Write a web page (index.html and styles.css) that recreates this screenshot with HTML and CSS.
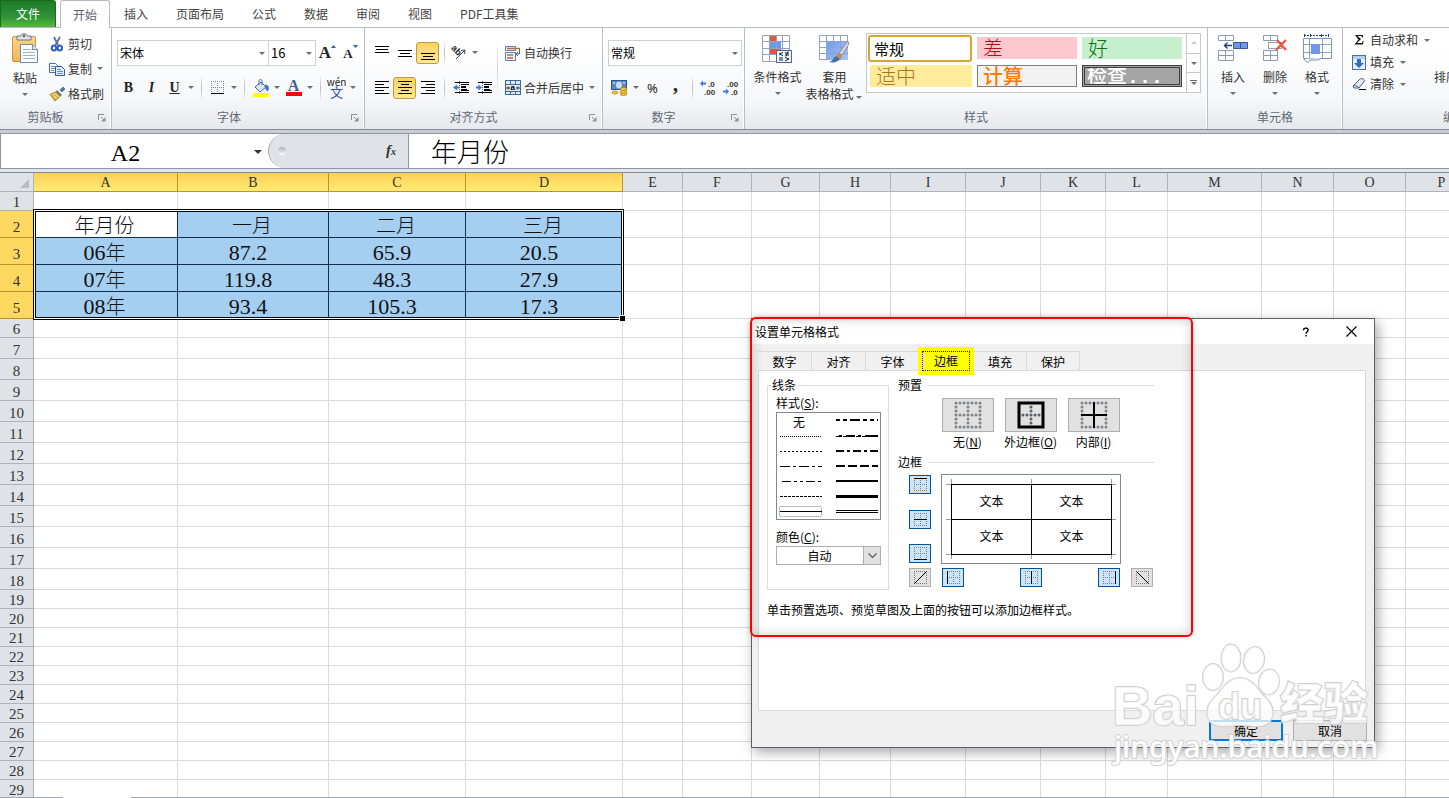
FILE: index.html
```html
<!DOCTYPE html>
<html lang="zh-CN">
<head>
<meta charset="utf-8">
<title>设置单元格格式</title>
<link rel="stylesheet" href="styles.css">
</head>
<body>
<svg class="defs" width="0" height="0" aria-hidden="true">
  <defs>
    <linearGradient id="cellBlue" x1="0" y1="0" x2="1" y2="1"><stop offset="0" stop-color="#6f9af0"/><stop offset="1" stop-color="#a9c4fa"/></linearGradient>
    <linearGradient id="gold" x1="0" y1="0" x2="0" y2="1"><stop offset="0" stop-color="#f9d58a"/><stop offset="1" stop-color="#eeb656"/></linearGradient>
    <symbol id="launch" viewBox="0 0 8 8"><path d="M.5 6V.5H6" fill="none" stroke="#8a9099"/><path d="M3 3l3 3" stroke="#8a9099"/><path d="M7.500 3v4.500H3z" fill="#8a9099"/></symbol>
    <symbol id="dots" viewBox="0 0 13 13"><path d="M0 .5h13M0 6.500h13M0 12.500h13M.5 0v13M6.500 0v13M12.500 0v13" stroke="#777f88" stroke-dasharray="1 1" fill="none"/></symbol>
    <symbol id="dotframe" viewBox="0 0 13 13"><path d="M0 .5h13M0 12.500h13M.5 0v13M12.500 0v13" stroke="#777" stroke-dasharray="1 1" fill="none"/></symbol>
  </defs>
</svg>
<div class="app">
  <nav class="tabs">
    <button class="tab tab-file">文件</button>
    <button class="tab tab-active">开始</button>
    <button class="tab">插入</button>
    <button class="tab">页面布局</button>
    <button class="tab">公式</button>
    <button class="tab">数据</button>
    <button class="tab">审阅</button>
    <button class="tab">视图</button>
    <button class="tab">PDF工具集</button>
  </nav>

  <div class="ribbon">
    <section class="group g-clip">
      <div class="group-body">
        <button class="big paste">
          <svg width="28" height="32" viewBox="0 0 28 32"><rect x="1.500" y="3.500" width="23" height="25" rx="1.500" fill="url(#gold)" stroke="#cf9440"/><path d="M6 3h4c0-3 6-3 6 0h4v4H6z" fill="#dfe3e8" stroke="#6d747d"/><circle cx="13" cy="3" r="1.200" fill="#555"/><path d="M9.500 11.500h12l5 5v13h-17z" fill="#fff" stroke="#7488a8"/><path d="M21.500 11.500v5h5" fill="#dce6f4" stroke="#7488a8"/><path d="M12 16.500h8M12 19.500h12M12 22.500h12M12 25.500h12" stroke="#9db4d6"/></svg>
          <span>粘贴</span><i class="caret"></i>
        </button>
        <div class="stack">
          <button class="line"><svg width="16" height="16" viewBox="0 0 16 16"><path d="M5 1l4 8M11 1L6.500 9" stroke="#58708c" stroke-width="1.800" fill="none"/><ellipse cx="5" cy="12" rx="2.200" ry="2.500" fill="none" stroke="#2d5fc0" stroke-width="2"/><ellipse cx="10.800" cy="12" rx="2.200" ry="2.500" fill="none" stroke="#2d5fc0" stroke-width="2"/></svg>剪切</button>
          <button class="line"><svg width="16" height="16" viewBox="0 0 16 16"><path d="M.5 2.500h6l2 2v7h-8z" fill="#fff" stroke="#4a6ea9"/><path d="M2 5.500h4M2 7.500h4M2 9.500h3" stroke="#5b8ad0"/><path d="M6.500 5.500h6l3 3v6h-9z" fill="#e9f1fd" stroke="#2d5796"/><path d="M8 8.500h4M8 10.500h6M8 12.500h6" stroke="#5b8ad0"/></svg>复制<i class="caret"></i></button>
          <button class="line"><svg width="16" height="16" viewBox="0 0 16 16"><path d="M11 4l3-3 2 2-3 3z" fill="#5378ae" stroke="#33517f" stroke-width=".6"/><path d="M8 4l5 5-2 1.500L6.500 6z" fill="#75797e"/><path d="M6.500 6L1 8.500 6 15l5-4.500z" fill="#f2d469" stroke="#9d8029"/><path d="M3 9l4 5M5 8l4 4" stroke="#c5a23c"/></svg>格式刷</button>
        </div>
      </div>
      <footer>剪贴板<svg class="launch"><use href="#launch"/></svg></footer>
    </section>

    <section class="group g-font">
      <div class="group-body rows">
        <div class="row">
          <label class="combo"><select class="w-name" aria-label="字体"><option>宋体</option></select></label>
          <label class="combo joined"><select class="w-size" aria-label="字号"><option>16</option></select></label>
          <button class="ib serif grow">A<svg width="5" height="3"><path d="M0 3h5L2.500 0z" fill="#2d5fa8"/></svg></button>
          <button class="ib serif shrink">A<svg width="5" height="3"><path d="M0 0h5L2.500 3z" fill="#2d5fa8"/></svg></button>
        </div>
        <div class="row">
          <button class="ib serif b">B</button><button class="ib serif i">I</button><button class="ib serif u">U</button><i class="caret"></i><i class="sep"></i>
          <button class="ib"><svg width="13" height="13"><use href="#dots"/><path d="M0 12.500h13" stroke="#000"/></svg></button><i class="caret"></i><i class="sep"></i>
          <button class="ib"><svg width="18" height="18" viewBox="0 0 18 18"><path d="M3 8l6-5 5 5-6 5z" fill="#dbe6f4" stroke="#446a9e"/><path d="M7 6V2c0-2 3-2 3 0v4" fill="none" stroke="#446a9e"/><path d="M13 6c4 0 4 4 2.500 6-1.500-1-2-3-2.500-6z" fill="#3f74c4" stroke="#3f74c4"/><path d="M1 14h16v4H1z" fill="#ff0"/></svg></button><i class="caret"></i>
          <button class="ib serif fontcolor">A<b></b></button><i class="caret"></i><i class="sep"></i>
          <button class="ib wen"><span>wén</span><b>文</b></button><i class="caret"></i>
        </div>
      </div>
      <footer>字体<svg class="launch"><use href="#launch"/></svg></footer>
    </section>

    <section class="group g-align">
      <div class="group-body">
        <div class="rows align-left">
          <div class="row">
            <button class="ib"><svg width="14" height="14"><path d="M0 .5h14M1 3.500h12M0 6.500h14" stroke="#000"/></svg></button>
            <button class="ib"><svg width="14" height="14"><path d="M0 4.500h14M2 7.500h10M0 10.500h14" stroke="#000"/></svg></button>
            <button class="ib on"><svg width="14" height="14"><path d="M0 7.500h14M2 10.500h10M0 13.500h14" stroke="#000"/></svg></button>
            <i class="sep"></i>
            <button class="ib orient"><svg width="17" height="17" viewBox="0 0 17 17"><text x="0" y="8" transform="rotate(45 4 6)" class="abtext">ab</text><path d="M5 15L14 6M14 6l-4 .5M14 6l-.5 4" stroke="#445" fill="none"/></svg></button><i class="caret"></i>
          </div>
          <div class="row">
            <button class="ib"><svg width="14" height="13"><path d="M0 .5h14M0 3.500h9M0 6.500h14M0 9.500h9M0 12.500h14" stroke="#000"/></svg></button>
            <button class="ib on"><svg width="14" height="13"><path d="M0 .5h14M3 3.500h8M0 6.500h14M3 9.500h8M0 12.500h14" stroke="#000"/></svg></button>
            <button class="ib"><svg width="14" height="13"><path d="M0 .5h14M5 3.500h9M0 6.500h14M5 9.500h9M0 12.500h14" stroke="#000"/></svg></button>
            <i class="sep"></i>
            <button class="ib"><svg width="16" height="14"><path d="M2 1.500h14M8 3.500h8M8 9.500h8M2 11.500h14" stroke="#000"/><path d="M8 6h5M8 9h6" stroke="#000" stroke-width="2"/><path d="M0 6.500l4-3v2h2v2H4v2z" fill="#3f78d8"/><path d="M6.500 0v14" stroke="#666" stroke-dasharray="1 1"/></svg></button>
            <button class="ib"><svg width="16" height="14"><path d="M2 1.500h14M8 3.500h8M8 9.500h8M2 11.500h14" stroke="#000"/><path d="M8 6h5M8 9h6" stroke="#000" stroke-width="2"/><path d="M6 6.500l-3.500-3v2H0v2h2.500v2z" fill="#3f78d8"/><path d="M6.500 0v14" stroke="#666" stroke-dasharray="1 1"/></svg></button>
          </div>
        </div>
        <div class="rows align-right">
          <div class="row"><button class="line"><svg width="16" height="16" viewBox="0 0 16 16"><path d="M.5 1.500h10v4H.5zM.5 7.500h10v8H.5z" fill="#eef3fa" stroke="#5e7ba8"/><path d="M2 3.500h13M2 10h6M2 13h6" stroke="#b06b4a" stroke-width="1.500"/><path d="M14.500 4v5h-3M13 7l-2 2 2 2" fill="none" stroke="#3c68ac"/></svg>自动换行</button></div>
          <div class="row"><button class="line"><svg width="16" height="16" viewBox="0 0 16 16"><rect x=".5" y=".5" width="15" height="14" fill="#dfeafa" stroke="#44679b"/><path d="M0 4.500h16M0 11.500h16M5.500 0v4M10.500 0v4M5.500 11v4M10.500 11v4" stroke="#44679b"/><path d="M1 8h3M15 8h-3M3 6.500L4.500 8 3 9.500M13 6.500L11.500 8 13 9.500" stroke="#222" fill="none"/><text x="5.500" y="10" class="tinya">a</text></svg>合并后居中<i class="caret"></i></button></div>
        </div>
      </div>
      <footer>对齐方式<svg class="launch"><use href="#launch"/></svg></footer>
    </section>

    <section class="group g-num">
      <div class="group-body rows">
        <div class="row"><label class="combo"><select class="w-format" aria-label="数字格式"><option>常规</option></select></label></div>
        <div class="row">
          <button class="ib"><svg width="17" height="17" viewBox="0 0 17 17"><rect x=".5" y="1.500" width="15" height="9" fill="#5f86c4" stroke="#2f5590"/><ellipse cx="8" cy="6" rx="3" ry="3.500" fill="#c9dcf6"/><path d="M2 4h2M12 4h2" stroke="#fff"/><g fill="#f5c843" stroke="#a9771d" stroke-width=".7"><ellipse cx="4" cy="13.500" rx="3" ry="1.500"/><ellipse cx="12.500" cy="15" rx="3.500" ry="1.500"/><ellipse cx="12.500" cy="12.500" rx="3.500" ry="1.500"/><ellipse cx="12.500" cy="10" rx="3.500" ry="1.500"/></g></svg></button><i class="caret"></i>
          <button class="ib pct">%</button><button class="ib serif comma">,</button><i class="sep"></i>
          <button class="ib"><svg width="17" height="16" viewBox="0 0 17 16"><path d="M0 3.500l3-3v2h3v2H3v2z" fill="#3f78d8"/><text x="8" y="7" class="deci">.0</text><text x="4" y="15" class="deci">.00</text></svg></button>
          <button class="ib"><svg width="17" height="16" viewBox="0 0 17 16"><text x="4" y="7" class="deci">.00</text><text x="8" y="15" class="deci">.0</text><path d="M6 11.500l-3-3v2H0v2h3v2z" fill="#3f78d8"/></svg></button>
        </div>
      </div>
      <footer>数字<svg class="launch"><use href="#launch"/></svg></footer>
    </section>

    <section class="group g-style">
      <div class="group-body">
        <button class="big wide"><svg width="31" height="29" viewBox="0 0 31 29"><path d="M.5 1.500h27v26H.5z" fill="#fff" stroke="#93a4bd"/><path d="M7 2h7v5H7zM7 14h7v6H7z" fill="#e5553f"/><path d="M7 8h12v6H7z" fill="#6f97ea"/><path d="M14 14h5v6h-5z" fill="#e5553f"/><path d="M0 7.500h28M0 14.500h28M0 20.500h28M7.500 1v26M14.500 1v26M20.500 1v26" stroke="#93a4bd" fill="none"/><rect x="14.500" y="16.500" width="15" height="12" fill="#eef3fb" stroke="#4d6a94"/><path d="M21 18.500l-4 1.500 4 1.500M17 24h4M17 26h4M23 19h4M23 21h4M26 17.500l-2 5M23 23.500l4 1.500-4 2" stroke="#222" fill="none"/></svg><span>条件格式</span><i class="caret"></i></button>
        <button class="big wide"><svg width="31" height="29" viewBox="0 0 31 29"><path d="M.5 1.500h28v24H.5z" fill="#fff" stroke="#93a4bd"/><path d="M7 7h22v19H7z" fill="url(#cellBlue)"/><path d="M0 7.500h29M0 13.500h29M0 19.500h29M7.500 1v25M14.500 1v25M21.500 1v25" stroke="#8aa2cc" fill="none"/><path d="M29 7L20 19l3 2 7-11z" fill="#d8dadd" stroke="#777" stroke-width=".7"/><path d="M19 19l4 3-2 3-4-3z" fill="#c98b3e"/><path d="M17 22l4 3c-2 3-6 4-11 3 4-1 4-4 7-6z" fill="#446fae"/></svg><span>套用<br>表格格式<i class="caret"></i></span></button>
        <div class="gallery">
          <div class="swatches">
            <button class="sw s-normal">常规</button><button class="sw s-bad">差</button><button class="sw s-good">好</button>
            <button class="sw s-neutral">适中</button><button class="sw s-calc">计算</button><button class="sw s-check">检查<span>...</span></button>
          </div>
          <div class="scroll"><button class="up" aria-label="上"><i class="caret"></i></button><button aria-label="下"><i class="caret"></i></button><button class="more" aria-label="更多"><i class="caret"></i></button></div>
        </div>
      </div>
      <footer>样式</footer>
    </section>

    <section class="group g-cells">
      <div class="group-body">
        <button class="big"><svg width="31" height="29" viewBox="0 0 31 29"><path d="M.5 1.500h15v5H.5zM.5 16.500h15v10H.5zM.5 21.500h15M7.500 1v5M7.500 16v10" fill="#fff" stroke="#8b9bb3"/><path d="M15.500 8.500h14v6h-14z" fill="#6f97ea" stroke="#35598f"/><path d="M22.500 8v6" stroke="#35598f"/><path d="M14 11.500H7M9.500 8.500l-3 3 3 3" stroke="#223f77" stroke-width="1.400" fill="none"/></svg><span>插入</span><i class="caret"></i></button>
        <button class="big"><svg width="31" height="29" viewBox="0 0 31 29"><path d="M3.500 1.500h14v5h-14zM3.500 16.500h14v10h-14zM3.500 21.500h14M10.500 1v5M10.500 16v10" fill="#fff" stroke="#8b9bb3"/><path d="M8.500 8.500h13v6h-13z" fill="none" stroke="#223f77" stroke-dasharray="1 1"/><path d="M17 6l9 10M26 6l-10 10" stroke="#f0503a" stroke-width="2.200"/></svg><span>删除</span><i class="caret"></i></button>
        <button class="big"><svg width="31" height="29" viewBox="0 0 31 29"><path d="M1.500 4.500h28v20h-28z" fill="#fff" stroke="#7d93b5"/><path d="M1 10.500h29M1 18.500h29M7.500 4v20M20.500 4v20" stroke="#8aa0c4"/><path d="M9 10h9v10H9z" fill="#6f97ea"/><path d="M2 1.500h25" stroke="#223f77" stroke-dasharray="2 1"/><path d="M2.500 0v3M8.500 0v3M19.500 0v3M26.500 0v3" stroke="#223f77"/><path d="M2 25c2 4 5 4 6 1h8l3-2" fill="#fff" stroke="#7d93b5"/></svg><span>格式</span><i class="caret"></i></button>
      </div>
      <footer>单元格</footer>
    </section>

    <section class="group g-edit">
      <div class="group-body">
        <div class="stack">
          <button class="line"><svg width="14" height="14" viewBox="0 0 14 14"><path d="M3 3h8v2.500h-1L9.500 4H5.500L9 7l-4 4h5l.8-2h.8L11 12.500H2.500L6.500 7.500z" fill="#111" transform="translate(0 -1)"/></svg>自动求和<i class="caret"></i></button>
          <button class="line"><svg width="14" height="15" viewBox="0 0 14 15"><rect x=".5" y=".5" width="13" height="14" fill="#e5effc" stroke="#4b6fa5"/><path d="M1 1h12v3H1z" fill="#b9cdea"/><path d="M5 4h4v4h3l-5 5-5-5h3z" fill="#2f6bd0"/></svg>填充<i class="caret"></i></button>
          <button class="line"><svg width="14" height="14" viewBox="0 0 14 14"><path d="M1 9l7-7c1-1 5 0 4.500 2L7 11H2z" fill="#dfe9f6" stroke="#4b5f80"/><path d="M1 9c2-1 5 0 6 2" fill="none" stroke="#4b5f80"/><path d="M7 12.500h7" stroke="#000"/></svg>清除<i class="caret"></i></button>
        </div>
        <button class="big sort">排序和筛选</button>
      </div>
      <footer>编辑</footer>
    </section>
  </div>

  <div class="formula">
    <label class="namebox"><select aria-label="名称框"><option>A2</option></select></label>
    <div class="fx"><i class="knob"></i><button>f<sub>x</sub></button></div>
    <input class="formula-input" aria-label="编辑栏" value="年月份">
  </div>

  <main class="sheet">
    <table class="grid">
      <colgroup id="cols"></colgroup>
      <thead><tr id="letters"><th class="corner"><svg width="9" height="9"><path d="M9 0v9H0z" fill="#b8bcc2"/></svg></th></tr></thead>
      <tbody id="cells"></tbody>
    </table>
    <div class="selection"></div>
  </main>
  <div class="bottomline"></div>
</div>

<div class="dialog" role="dialog" aria-label="设置单元格格式">
  <header>
    <h1>设置单元格格式</h1>
    <button aria-label="帮助"><svg width="8" height="10" viewBox="0 0 8 10"><path d="M1.500 3.200C1.500.4 6.200.4 6.200 3c0 1.600-2.200 1.800-2.200 3.700M4 8v1.600" fill="none" stroke="#000" stroke-width="1.400"/></svg></button>
    <button aria-label="关闭"><svg width="11" height="11"><path d="M.5 .5l10 10M10.500 .5l-10 10" stroke="#000" stroke-width="1.200"/></svg></button>
  </header>
  <div class="dtabs"><button>数字</button><button>对齐</button><button>字体</button><button class="current"><span>边框</span></button><button>填充</button><button>保护</button></div>
  <div class="page">
    <div class="columns">
      <fieldset class="lines">
        <legend>线条</legend>
        <div class="cap">样式(<u>S</u>):</div>
        <div class="stylelist" role="listbox" aria-label="样式">
          <span>无</span>
          <svg width="105" height="105" viewBox="0 0 105 105" fill="none" stroke="#000">
            <path d="M3 23.500h42" stroke-dasharray="1 1"/><path d="M3 38.500h42" stroke-dasharray="2 2"/><path d="M3 53.500h42" stroke-dasharray="10 3 3 3"/><path d="M5 68.500h40" stroke-dasharray="9 3 3 3 3 3"/><path d="M3 83.500h42" stroke-dasharray="3 1"/><path d="M3 98.500h42"/>
            <rect x="2.500" y="93.500" width="42" height="10" rx="1" stroke="#777" stroke-dasharray="1 1"/>
            <path d="M59 7h42" stroke-width="2" stroke-dasharray="4 3 4 3 10 3"/><path d="M59 23.500h6M66 23.500h12M79 23.500h5M85 23.500h16M62 22.500h3M69 22.500h9M81 22.500h3M88 22.500h13"/><path d="M59 38h42" stroke-width="2" stroke-dasharray="8 3 3 3"/><path d="M59 53h42" stroke-width="2" stroke-dasharray="9 3"/><path d="M59 68h42" stroke-width="2"/><path d="M59 83.500h42" stroke-width="3"/><path d="M59 97.500h42M59 99.500h42"/>
          </svg>
        </div>
        <label class="cap" for="color">颜色(<u>C</u>):</label>
        <div class="colorbox"><select id="color"><option>自动</option></select><i><svg width="9" height="6"><path d="M.5 .5l4 4 4-4" fill="none" stroke="#555" stroke-width="1.200"/></svg></i></div>
      </fieldset>
      <div class="right">
        <h2>预置</h2>
        <div class="presets">
          <button><b><svg width="28" height="28" viewBox="0 0 28 28" fill="none" stroke="#808388" stroke-width="3" stroke-linecap="round" stroke-dasharray="0 4"><path d="M2 2h25M2 14h25M2 26h25M2 2v25M14 2v25M26 2v25"/></svg></b>无(<u>N</u>)</button>
          <button><b><svg width="28" height="28" viewBox="0 0 28 28" fill="none"><path d="M6 14h17M14 6v17" stroke="#59616c" stroke-width="3" stroke-linecap="round" stroke-dasharray="0 4"/><rect x="2" y="2" width="24" height="24" stroke="#000" stroke-width="3"/></svg></b>外边框(<u>O</u>)</button>
          <button><b><svg width="28" height="28" viewBox="0 0 28 28" fill="none"><path d="M2 2h25M2 26h25M2 2v25M26 2v25" stroke="#808388" stroke-width="3" stroke-linecap="round" stroke-dasharray="0 4"/><path d="M1 14h26M14 1v26" stroke="#000" stroke-width="2"/></svg></b>内部(<u>I</u>)</button>
        </div>
        <h2>边框</h2>
        <div class="borders">
          <div class="side">
            <button class="bb on" aria-label="上边框"><svg width="13" height="13"><use href="#dots"/><path d="M0 .5h13" stroke="#000"/></svg></button>
            <button class="bb on" aria-label="中间横线"><svg width="13" height="13"><use href="#dots"/><path d="M0 6.500h13" stroke="#000"/></svg></button>
            <button class="bb on" aria-label="下边框"><svg width="13" height="13"><use href="#dots"/><path d="M0 12.500h13" stroke="#000"/></svg></button>
          </div>
          <div class="preview">
            <svg class="ticks" width="178" height="88" fill="none"><path d="M4 9.500h170M4 44.500h170M4 79.500h170M9.500 4v80M89.500 4v80M169.500 4v80" stroke="#999" /></svg>
            <div class="texts"><span>文本</span><span>文本</span><span>文本</span><span>文本</span></div>
          </div>
          <button class="bb" aria-label="斜线"><svg width="13" height="13"><use href="#dotframe"/><path d="M.5 12.500l12-12" stroke="#000"/></svg></button>
          <div class="below">
            <button class="bb on" aria-label="左边框"><svg width="13" height="13"><use href="#dots"/><path d="M.5 0v13" stroke="#000"/></svg></button>
            <button class="bb on" aria-label="中间竖线"><svg width="13" height="13"><use href="#dots"/><path d="M6.500 0v13" stroke="#000"/></svg></button>
            <button class="bb on" aria-label="右边框"><svg width="13" height="13"><use href="#dots"/><path d="M12.500 0v13" stroke="#000"/></svg></button>
          </div>
          <button class="bb" aria-label="反斜线"><svg width="13" height="13"><use href="#dotframe"/><path d="M.5 .5l12 12" stroke="#000"/></svg></button>
        </div>
      </div>
    </div>
    <p>单击预置选项、预览草图及上面的按钮可以添加边框样式。</p>
  </div>
  <div class="actions"><button class="default">确定</button><button>取消</button></div>
  <div class="marker"></div>
  <svg class="watermark" width="290" height="130" viewBox="0 0 290 130">
    <g class="wm">
      <ellipse cx="121" cy="37" rx="10" ry="13"/>
      <ellipse cx="139" cy="18" rx="9.500" ry="13.500"/>
      <ellipse cx="162" cy="20" rx="10" ry="13" transform="rotate(12 162 20)"/>
      <ellipse cx="177" cy="42" rx="10" ry="12.500" transform="rotate(8 177 42)"/>
      <path d="M148 38c13 0 19 14 26 20 9 8 10 26-5 28-8 1-13-1-21-1s-14 2-21 1c-15-2-14-20-5-28 7-6 13-20 26-20z"/>
      <text x="20" y="85" class="bai">Bai</text>
      <text x="126" y="79" class="du">du</text>
      <text x="188" y="80" class="jy">经验</text>
      <text x="22" y="118" class="url">jingyan.baidu.com</text>
    </g>
  </svg>
</div>
<script src="app.js"></script>
</body>
</html>
```
FILE: styles.css
```css
* { box-sizing: border-box; }
body { margin: 0; font: 12px/16px "Noto Sans CJK SC", sans-serif; color: #333; background: #fff; overflow: hidden; }
button, select, input { font: inherit; color: inherit; margin: 0; padding: 0; border: 0; background: none; border-radius: 0; }
select { appearance: none; }
svg { display: block; flex: none; overflow: visible; }
.defs { position: absolute; }
.app { height: 100vh; display: flex; flex-direction: column; overflow: hidden; }

/* ribbon tabs */
.tabs { display: flex; height: 28px; flex: none; border-bottom: 1px solid #b6babf; padding-right: 14px; }
.tab { padding: 0 14px; color: #444; white-space: nowrap; }
.tab-file { width: 56px; margin-right: 4px; color: #fff; background: linear-gradient(#1d7a28, #2f9238 60%, #55b93c); border: 1px solid #1b6a22; border-bottom: 0; border-radius: 0 3px 0 0; }
.tab-active { padding: 0 12px; height: 28px; background: #fff; border: 1px solid #b6babf; border-bottom: 0; border-radius: 3px 3px 0 0; color: #5a6270; }

/* ribbon */
.ribbon { display: flex; height: 102px; flex: none; background: linear-gradient(#fff 20%, #f6f7f9 70%, #e6e9ed); border-bottom: 1px solid #868b93; overflow: hidden; }
.group { flex: none; display: flex; flex-direction: column; border-right: 1px solid #b9bec6; box-shadow: inset -1px 0 #fff; padding: 0 4px; }
.group-body { flex: 1; display: flex; }
.group footer { display: flex; justify-content: center; height: 22px; position: relative; color: #5f6875; line-height: 20px; }
.launch { position: absolute; right: 1px; top: 7px; width: 8px; height: 8px; }
.g-clip { width: 112px; }
.g-clip footer { padding-right: 20px; }
.g-font { width: 253px; }
.g-font footer { padding-right: 18px; }
.g-align { width: 238px; }
.g-align footer { padding-right: 20px; }
.g-num { width: 142px; }
.g-num footer { padding-right: 20px; }
.g-style { width: 463px; }
.g-cells { width: 135px; }
.g-edit { width: 210px; border: 0; }
.caret { flex: none; display: inline-flex; width: 10px; height: 6px; align-items: center; justify-content: center; }
.caret::after { content: ""; border: 3px solid transparent; border-top-color: #6a6e75; border-bottom: 0; }
.sep { flex: none; width: 10px; height: 26px; background: linear-gradient(transparent, #bbb, transparent) center / 1px 100% no-repeat; }
.big { width: 42px; flex: none; display: flex; flex-direction: column; align-items: center; padding-top: 6px; white-space: nowrap; }
.big > svg { margin-bottom: 5px; }
.big > span { line-height: 17px; }
.big > .caret { margin-top: 5px; }
.big.wide { width: 57px; }
.paste { padding-top: 5px; }
.paste > svg { margin-bottom: 4px; }
.g-clip .stack { padding: 3px 0 0 3px; }
.g-clip .line { height: 25px; }
.line { display: flex; align-items: center; gap: 3px; height: 22px; white-space: nowrap; }
.rows { display: flex; flex-direction: column; padding-top: 8px; gap: 2px; }
.row { display: flex; align-items: center; height: 33px; }
.combo { position: relative; display: flex; color: #000; }
.combo select { height: 26px; border: 1px solid #cdd0d4; background: #fff; padding-left: 2px; }
.combo::after { content: ""; position: absolute; right: 4px; top: 12px; border: 3px solid transparent; border-top-color: #6a6e75; border-bottom: 0; pointer-events: none; }
.group-body.rows { padding: 8px 0 0 1px; }
.w-name { width: 152px; }
.joined { margin-left: -1px; }
.combo .w-size { width: 48px; font-size: 13px; }
.w-format { width: 134px; }
.ib { width: 23px; height: 22px; flex: none; display: flex; align-items: center; justify-content: center; color: #222; }
.on { background: linear-gradient(#fbd25f, #ffe98c); border: 1px solid #c29a42; border-radius: 3px; }
.serif { font-family: "Liberation Serif", serif; font-weight: bold; }
.grow { font-size: 17px; align-items: flex-start; line-height: 22px; }
.shrink { font-size: 13px; align-items: flex-start; line-height: 24px; }
.grow svg, .shrink svg { margin-top: 3px; }
.b { font-size: 14px; } .i { font-size: 14px; font-style: italic; } .u { font-size: 14px; text-decoration: underline; }
.fontcolor { flex-direction: column; font-size: 16px; line-height: 13px; color: #3b5f96; }
.fontcolor b { width: 16px; height: 4px; background: #f00; }
.wen { flex-direction: column; font-size: 10px; line-height: 8px; }
.wen b { font-size: 13px; line-height: 11px; font-weight: normal; color: #3350b5; }
.g-align .group-body { padding-left: 1px; }
.align-left { width: 128px; background: linear-gradient(transparent, #ccc, transparent) right center / 1px 70% no-repeat; }
.align-right { padding-left: 7px; }
.align-left .orient { width: 21px; }
.abtext { font: bold 9px "Liberation Sans", sans-serif; fill: #222; }
.tinya { font: bold 8px "Liberation Sans", sans-serif; }
.deci { font: bold 8px "Liberation Sans", sans-serif; fill: #333; }
.pct { font-family: "Noto Sans", sans-serif; font-size: 13px; }
.comma { font-size: 20px; align-items: flex-start; line-height: 14px; }
.gallery { display: flex; height: 60px; margin-top: 5px; border: 1px solid #c5c9ce; background: #fff; margin-left: 3px; }
.swatches { display: grid; grid-template-columns: 104px 100px 100px; gap: 4px 5px; align-content: start; padding: 1px 4px 0 1px; overflow: hidden; }
.sw { height: 22px; margin-top: 2px; padding-left: 6px; text-align: left; font-size: 20px; line-height: 18px; overflow: hidden; white-space: nowrap; }
.s-normal { height: 27px; margin-top: 0; margin-bottom: -3px; border: 2px solid #d8a533; border-radius: 3px; font-size: 15px; line-height: 20px; padding-left: 4px; color: #000; }
.s-bad { background: #ffc7ce; color: #b01018; font-weight: 300; }
.s-good { background: #c6efce; color: #0c7010; font-weight: 300; }
.s-neutral { background: #ffeb9c; color: #a8761a; margin-left: 2px; font-weight: 300; }
.s-calc { background: #f2f2f2; color: #fa7d00; border: 1px solid #7f7f7f; font-weight: 500; line-height: 14px; padding-left: 5px; }
.s-check { background: #a5a5a5; color: #fff; border: 3px double #3f3f3f; font-weight: 500; line-height: 12px; padding-left: 2px; }
.s-check span { font-family: "Liberation Mono", monospace; font-weight: bold; }
.scroll { width: 14px; display: flex; flex-direction: column; border-left: 1px solid #c5c9ce; }
.scroll button { flex: 1; display: flex; align-items: center; justify-content: center; }
.scroll button + button { border-top: 1px solid #c5c9ce; }
.up .caret { transform: rotate(180deg); opacity: .4; }
.more .caret { border-top: 1px solid #666; width: 7px; }
.g-edit .group-body { padding: 1px 0 0 5px; }
.g-edit .line { gap: 4px; }
.g-edit .stack { width: 74px; }
.g-edit footer { padding-left: 14px; }
.sort { width: 76px; padding-top: 40px; }

/* formula bar */
.formula { flex: none; display: flex; height: 43px; border-top: 3px solid #c9ced6; border-bottom: 1px solid #868b93; box-shadow: inset 0 1px #8f959d, inset 0 -3px #e1e5ee, inset 0 -4px #8f959d; background: #fff; padding: 1px 0 4px; }
.namebox { width: 268px; position: relative; display: flex; }
.namebox select { flex: 1; padding: 3px 18px 0 0; text-align: center; text-align-last: center; font: 24px/30px "Liberation Serif", serif; color: #000; border-left: 1px solid #8f959d; }
.namebox::after { content: ""; position: absolute; right: 6px; top: 16px; border: 4px solid transparent; border-top-color: #333; border-bottom: 0; pointer-events: none; }
.fx { width: 141px; display: flex; align-items: center; justify-content: space-between; padding: 0 12px 0 9px; background: #dfe3e8; border-left: 1px solid #a8adb5; border-right: 1px solid #8f959d; border-radius: 17px 0 0 17px; }
.fx button { font: italic bold 15px/18px "Liberation Serif", serif; }
.fx sub { font-size: 10px; vertical-align: baseline; }
.knob { width: 8px; height: 8px; border-radius: 4px; background: linear-gradient(#aab0b8, #fff); }
.formula-input { flex: 1; padding-left: 22px; font-size: 26px; font-weight: 300; line-height: 30px; color: #000; min-width: 0; outline: 0; }

/* worksheet */
.sheet { flex: 1; position: relative; overflow: hidden; min-height: 0; }
.grid { table-layout: fixed; width: 0; border-collapse: separate; border-spacing: 0; }
.grid th, .grid td { padding: 0; border: 0 solid #d9dadc; border-width: 0 1px 1px 0; white-space: nowrap; overflow: hidden; text-align: center; }
.grid th { height: 19px; font: 15px/15px "Liberation Serif", serif; color: #333; background: #dfe2e7; border-color: #aeb3bb; vertical-align: bottom; }
.grid thead th { vertical-align: middle; font-size: 14px; }
.grid thead .hot { background: linear-gradient(#fdcf59, #ffec70); border-color: #c08f35; }
.grid tbody .hot { background: #ffd95f; border-color: #c08f35; padding-bottom: 2px; }
.grid .corner svg { margin: 3px 4px 0 auto; }
.grid .tall th { height: 27px; }
.grid .mid th { height: 21px; }
.grid .data { background: #a4cff1; border-color: #12304d; color: #111; font: 22px/22px "Liberation Serif", "Noto Sans CJK SC", serif; padding: 3px 2px 0 0; }
.grid .data .cjk { font-size: 20px; line-height: 20px; font-weight: 300; }
.grid .num { padding-right: 10px; }
.grid .active { background: #fff; }
.selection { position: absolute; left: 33px; top: 36px; width: 591px; height: 111px; border: 1px solid #000; box-shadow: inset 0 0 0 1px #fff, inset 0 0 0 2px #000; }
.selection::after { content: ""; position: absolute; right: -2px; bottom: -2px; width: 5px; height: 5px; background: #000; border: 0 solid #fff; border-width: 1px 0 0 1px; }
.bottomline { flex: none; height: 1px; background: linear-gradient(90deg, #a4a8b0 63px, #fff 63px, #fff 131px, #a4a8b0 131px); }

/* dialog */
.dialog { position: absolute; left: 751px; top: 318px; width: 624px; display: flex; flex-direction: column; padding: 0 8px 6px 6px; background: #f0f0f0; border: 1px solid #5d6064; box-shadow: 3px 4px 12px rgba(0, 0, 0, .35); color: #000; }
.dialog header { display: flex; align-items: center; height: 25px; margin: 0 -8px 0 -6px; padding: 0 12px 0 3px; background: #fff; }
.dialog h1 { flex: 1; margin: 0; font-size: 12px; font-weight: normal; }
.dialog header button { width: 22px; height: 22px; margin-left: 23px; display: flex; align-items: center; justify-content: center; }
.dtabs { display: flex; margin-top: 7px; height: 19px; align-items: stretch; }
.dtabs button { width: 54px; height: 19px; border: 1px solid #d9d9d9; border-width: 1px 1px 0 0; line-height: 19px; }
.dtabs button:nth-last-child(-n+2) { width: 53px; }
.dtabs .current { width: 56px; height: 28px; margin: -4px 0 0 -2px; background: #ff0; border: 0; position: relative; padding: 4px; }
.current span { display: block; border: 1px dotted #222; line-height: 18px; }
.page { background: #fff; border: 1px solid #d9d9d9; height: 341px; padding: 6px 8px; }
.columns { display: flex; }
.lines { width: 122px; height: 213px; margin: 0; padding: 0 7px 0 8px; border: 1px solid #dcdcdc; flex: none; min-width: 0; }
.lines legend { margin-left: -5px; padding: 0 1px; line-height: 16px; }
.cap { display: block; line-height: 19px; }
.stylelist { position: relative; height: 108px; border: 1px solid #828790; margin-bottom: 7px; width: 105px; }
.stylelist span { position: absolute; left: 16px; top: 1px; }
.colorbox { position: relative; height: 19px; width: 105px; }
.colorbox select { width: 100%; height: 100%; border: 1px solid #abadb3; padding-right: 18px; text-align: center; text-align-last: center; }
.colorbox i { position: absolute; right: 0; top: 0; width: 18px; height: 19px; background: #e1e1e1; border: 1px solid #adadad; display: flex; align-items: center; justify-content: center; pointer-events: none; }
.right { width: 256px; margin-left: 9px; }
.right h2 { margin: 0; display: flex; align-items: center; gap: 6px; font-size: 12px; line-height: 16px; font-weight: normal; }
.right h2::after { content: ""; flex: 1; height: 1px; background: #dcdcdc; }
.presets { display: flex; padding: 5px 0 3px 38px; }
.presets button { width: 63px; white-space: nowrap; line-height: 18px; }
.presets b { width: 52px; height: 34px; margin: 0 auto 1px; background: #e1e1e1; border: 1px solid #adadad; display: flex; align-items: center; justify-content: center; }
.borders { display: grid; grid-template-columns: 22px 180px 22px; gap: 4px 10px; padding: 4px 0 0 11px; }
.side { display: flex; flex-direction: column; justify-content: space-between; height: 90px; padding: 1px 0; }
.bb { width: 22px; height: 19px; background: #e1e1e1; border: 1px solid #adadad; border-radius: 0; display: flex; align-items: center; justify-content: center; }
.bb.on { background: #cce4f7; border-color: #005499; border-radius: 0; }
.preview { position: relative; height: 90px; border: 1px solid #828790; padding: 9px; }
.ticks { position: absolute; left: 0; top: 0; }
.texts { position: relative; display: grid; grid-template-columns: 1fr 1fr; grid-template-rows: 1fr 1fr; width: 161px; height: 71px; gap: 1px; border: 1px solid #000; background: #000; }
.texts span { display: flex; align-items: center; justify-content: center; background: #fff; padding-bottom: 2px; }
.preview + .bb { grid-column: 1; }
.below { display: flex; justify-content: space-between; padding: 0 1px; }
.page p { margin: 12px 0 0; }
.actions { display: flex; justify-content: flex-end; gap: 10px; padding: 9px 0 0; margin-right: -1px; }
.actions button { width: 74px; height: 21px; background: #e1e1e1; border: 1px solid #adadad; line-height: 18px; }
.actions .default { border: 2px solid #0078d7; line-height: 17px; }
.marker { position: absolute; left: -2px; top: -2px; width: 443px; height: 320px; border: 2px solid #f00; border-radius: 6px; box-shadow: inset 0 0 12px rgba(0, 0, 0, .2), 0 0 4px rgba(0, 0, 0, .2); pointer-events: none; }
.watermark { position: absolute; left: 340px; top: 321px; pointer-events: none; }
.wm { fill: rgba(255, 255, 255, .75); stroke: #d0d0d0; stroke-width: 2px; paint-order: stroke; stroke-linejoin: round; }
.bai { font: bold 56px "Liberation Sans", sans-serif; }
.du { font: bold 36px "Liberation Sans", sans-serif; }
.jy { font: 900 44px "Noto Sans CJK SC", sans-serif; }
.url { font: 500 30px "Noto Sans", sans-serif; fill: #fff; }
```
FILE: app.js
```js
const widths = [144, 151, 137, 157, 60, 69, 68, 71, 75, 75, 65, 62, 94, 72, 72, 72];
const data = {
  2: ["年月份", "一月", "二月", "三月"],
  3: ["06年", "87.2", "65.9", "20.5"],
  4: ["07年", "119.8", "48.3", "27.9"],
  5: ["08年", "93.4", "105.3", "17.3"]
};
const cols = document.getElementById("cols");
const letters = document.getElementById("letters");
[34, ...widths].forEach(w => {
  const col = document.createElement("col");
  col.style.width = w + "px";
  cols.append(col);
});
widths.forEach((w, i) => {
  const th = document.createElement("th");
  th.textContent = String.fromCharCode(65 + i);
  if (i < 4) th.className = "hot";
  letters.append(th);
});
const body = document.getElementById("cells");
for (let r = 1; r <= 29; r++) {
  const tr = document.createElement("tr");
  if (data[r]) tr.className = "tall";
  else if (r >= 7 && r <= 18) tr.className = "mid";
  const th = document.createElement("th");
  th.textContent = r;
  if (data[r]) th.className = "hot";
  tr.append(th);
  widths.forEach((w, i) => {
    const td = document.createElement("td");
    const text = data[r] && data[r][i];
    if (text) {
      td.className = "data";
      if (text.includes(".")) td.classList.add("num");
      if (r === 2 && i === 0) td.classList.add("active");
      td.innerHTML = text.replace(/[^\d.]+/g, s => `<span class="cjk">${s}</span>`);
    }
    tr.append(td);
  });
  body.append(tr);
}
```
